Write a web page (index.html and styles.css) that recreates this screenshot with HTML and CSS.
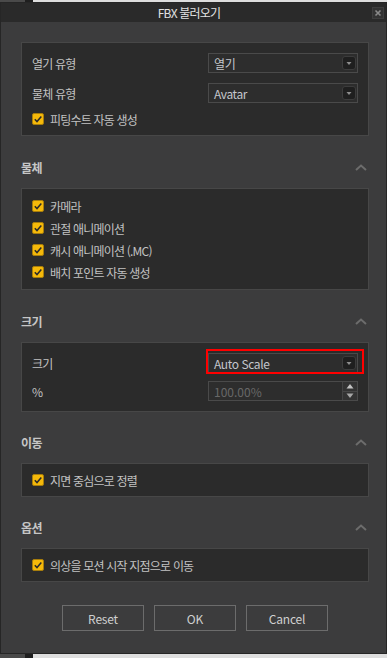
FILE: index.html
```html
<!DOCTYPE html>
<html lang="ko">
<head>
<meta charset="UTF-8">
<meta name="viewport" content="width=device-width, initial-scale=1.0">
<title>FBX 불러오기</title>
<link rel="stylesheet" href="styles.css">
</head>
<body>
<div class="dialog">
  <div class="titlebar">
    <span class="title">FBX 불러오기</span>
    <span class="close">
      <svg width="10" height="10" viewBox="0 0 10 10"><path d="M2.5 2.5 L7.5 7.5 M7.5 2.5 L2.5 7.5" stroke="#8a8a8a" stroke-width="1.6"/></svg>
    </span>
  </div>

  <div class="content">
    <div class="group">
      <div class="field">
        <span class="label">열기 유형</span>
        <div class="select"><span>열기</span><span class="arrow"><svg width="12" height="12" viewBox="0 0 12 12"><polygon points="3.5,5 8.5,5 6,8" fill="#8e8e8e"/></svg></span></div>
      </div>
      <div class="field">
        <span class="label">물체 유형</span>
        <div class="select"><span>Avatar</span><span class="arrow"><svg width="12" height="12" viewBox="0 0 12 12"><polygon points="3.5,5 8.5,5 6,8" fill="#8e8e8e"/></svg></span></div>
      </div>
      <label class="check"><span class="box"><svg width="12" height="12" viewBox="0 0 12 12"><path d="M2.8 6.2 L5 8.6 L9.3 3.4" fill="none" stroke="#2a2a2a" stroke-width="1.5"/></svg></span>피팅수트 자동 생성</label>
    </div>

    <div class="section-head"><span>물체</span><svg width="12" height="7" viewBox="0 0 12 7"><polyline points="1,6 6,1.5 11,6" fill="none" stroke="#6c6c6c" stroke-width="2"/></svg></div>
    <div class="group list">
      <label class="check"><span class="box"><svg width="12" height="12" viewBox="0 0 12 12"><path d="M2.8 6.2 L5 8.6 L9.3 3.4" fill="none" stroke="#2a2a2a" stroke-width="1.5"/></svg></span>카메라</label>
      <label class="check"><span class="box"><svg width="12" height="12" viewBox="0 0 12 12"><path d="M2.8 6.2 L5 8.6 L9.3 3.4" fill="none" stroke="#2a2a2a" stroke-width="1.5"/></svg></span>관절 애니메이션</label>
      <label class="check"><span class="box"><svg width="12" height="12" viewBox="0 0 12 12"><path d="M2.8 6.2 L5 8.6 L9.3 3.4" fill="none" stroke="#2a2a2a" stroke-width="1.5"/></svg></span>캐시 애니메이션 (.MC)</label>
      <label class="check"><span class="box"><svg width="12" height="12" viewBox="0 0 12 12"><path d="M2.8 6.2 L5 8.6 L9.3 3.4" fill="none" stroke="#2a2a2a" stroke-width="1.5"/></svg></span>배치 포인트 자동 생성</label>
    </div>

    <div class="section-head"><span>크기</span><svg width="12" height="7" viewBox="0 0 12 7"><polyline points="1,6 6,1.5 11,6" fill="none" stroke="#6c6c6c" stroke-width="2"/></svg></div>
    <div class="group tight">
      <div class="field">
        <span class="label">크기</span>
        <div class="select"><span>Auto Scale</span><span class="arrow"><svg width="12" height="12" viewBox="0 0 12 12"><polygon points="3.5,5 8.5,5 6,8" fill="#8e8e8e"/></svg></span><span class="highlight"></span></div>
      </div>
      <div class="field">
        <span class="label">%</span>
        <div class="spinbox"><span class="value">100.00%</span>
          <span class="spin">
            <span class="spin-up"><svg width="12" height="8" viewBox="0 0 12 8"><polygon points="2.5,6.5 9.5,6.5 6,2" fill="#c4c4c4"/></svg></span>
            <span class="spin-down"><svg width="12" height="8" viewBox="0 0 12 8"><polygon points="2.5,1.5 9.5,1.5 6,6" fill="#a8a8a8"/></svg></span>
          </span>
        </div>
      </div>
    </div>

    <div class="section-head near"><span>이동</span><svg width="12" height="7" viewBox="0 0 12 7"><polyline points="1,6 6,1.5 11,6" fill="none" stroke="#6c6c6c" stroke-width="2"/></svg></div>
    <div class="group">
      <label class="check"><span class="box"><svg width="12" height="12" viewBox="0 0 12 12"><path d="M2.8 6.2 L5 8.6 L9.3 3.4" fill="none" stroke="#2a2a2a" stroke-width="1.5"/></svg></span>지면 중심으로 정렬</label>
    </div>

    <div class="section-head near"><span>옵션</span><svg width="12" height="7" viewBox="0 0 12 7"><polyline points="1,6 6,1.5 11,6" fill="none" stroke="#6c6c6c" stroke-width="2"/></svg></div>
    <div class="group">
      <label class="check"><span class="box"><svg width="12" height="12" viewBox="0 0 12 12"><path d="M2.8 6.2 L5 8.6 L9.3 3.4" fill="none" stroke="#2a2a2a" stroke-width="1.5"/></svg></span>의상을 모션 시작 지점으로 이동</label>
    </div>

    <div class="buttons">
      <button class="btn">Reset</button>
      <button class="btn">OK</button>
      <button class="btn">Cancel</button>
    </div>
  </div>
</div>
</body>
</html>
```

FILE: styles.css
```css
body {
  margin: 0;
  padding: 2px 0 0 0;
  font-family: "Noto Sans CJK KR", "Noto Sans", sans-serif;
  font-size: 12px;
  letter-spacing: -0.8px;
  background: linear-gradient(to right, #4a4a4a 0, #4a4a4a 25px, #1f1f1f 25px, #1f1f1f 33px, #dedede 33px);
}

.dialog {
  width: 387px;
  box-sizing: border-box;
  border: 1px solid #262626;
  background-color: #3c3c3d;
}

.titlebar {
  height: 19px;
  display: flex;
  align-items: center;
  background-color: #2a2a2a;
  color: #e2e2e2;
}

.title {
  flex: 1;
  text-align: center;
  padding-left: 5px;
}

.close {
  width: 10px;
  height: 10px;
  margin: 0 2px 0 0;
  background-color: #333;
  border: 1px solid #3e3e3e;
  display: flex;
}

.content {
  padding: 20px 17px 22px 20px;
}

.group {
  background-color: #2b2b2b;
  border: 1px solid #474747;
  padding: 10px;
  display: flex;
  flex-direction: column;
  gap: 10px;
}

.group.list {
  padding: 11px 10px;
}

.group.tight {
  gap: 8px;
}

.section-head {
  height: 24px;
  margin: 19px 2px 9px 0;
  display: flex;
  justify-content: space-between;
  align-items: center;
  color: #c6c6c6;
  font-weight: bold;
  letter-spacing: -0.5px;
}

.section-head.near {
  margin-top: 18px;
}

.field {
  height: 20px;
  display: flex;
  justify-content: space-between;
  align-items: center;
}

.label {
  color: #c2c2c2;
}

.select,
.spinbox {
  position: relative;
  width: 150px;
  height: 20px;
  box-sizing: border-box;
  border: 1px solid #4a4a4a;
  background-color: #2d2d2d;
  display: flex;
  align-items: center;
  justify-content: space-between;
  padding-left: 5px;
  color: #c4c6cc;
  letter-spacing: -0.4px;
}

.select .arrow {
  width: 14px;
  height: 14px;
  box-sizing: border-box;
  margin-right: 1px;
  border: 1px solid #3c3c3c;
  border-radius: 3px;
  background-color: #1f1f1f;
  display: flex;
  align-items: center;
  justify-content: center;
}

.highlight {
  position: absolute;
  left: -3px;
  top: -5px;
  width: 158px;
  height: 25px;
  box-sizing: border-box;
  border: 2px solid #ff0000;
}

.spinbox .value {
  color: #686868;
  letter-spacing: 0;
}

.spin {
  width: 14px;
  height: 18px;
  display: flex;
  flex-direction: column;
  border-left: 1px solid #444;
}

.spin-up,
.spin-down {
  flex: 1;
  display: flex;
  align-items: center;
  justify-content: center;
  background-color: #333;
}

.spin-up {
  border-bottom: 1px solid #474747;
}

.check {
  height: 12px;
  display: flex;
  align-items: center;
  gap: 6px;
  color: #c2c2c2;
}

.check .box {
  width: 12px;
  height: 12px;
  box-sizing: border-box;
  border: 1px solid #a77d0c;
  border-radius: 2px;
  background-color: #f5b90a;
  display: flex;
  align-items: center;
  justify-content: center;
}

.check .box svg {
  flex: none;
}

.buttons {
  margin-top: 23px;
  display: flex;
  justify-content: center;
  gap: 10px;
}

.btn {
  width: 82px;
  height: 26px;
  border: 1px solid #6c6c6c;
  background-color: #3c3c3d;
  color: #d0d0d0;
  font-family: "Noto Sans CJK KR", "Noto Sans", sans-serif;
  font-size: 12px;
  letter-spacing: -0.2px;
  padding: 0;
}
```
